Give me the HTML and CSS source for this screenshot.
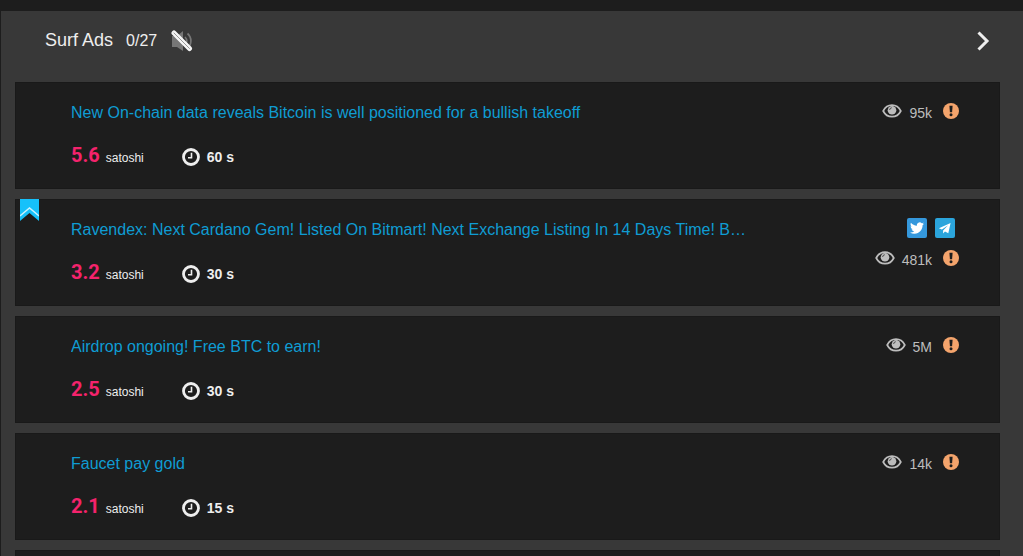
FILE: index.html
```html
<!DOCTYPE html>
<html lang="en">
<head>
<meta charset="utf-8">
<meta name="viewport" content="width=device-width, initial-scale=1">
<title>Surf Ads</title>
<link rel="stylesheet" href="styles.css">
</head>
<body>
<svg class="sprite" aria-hidden="true">
  <symbol id="clock" viewBox="0 0 18 18">
    <circle cx="9" cy="9" r="7.500" fill="none" stroke="currentColor" stroke-width="2.800"/>
    <path d="M9.500 4.800v5H6" fill="none" stroke="currentColor" stroke-width="1.600"/>
  </symbol>
  <symbol id="eye" viewBox="0 0 20 14">
    <path d="M1.200 7C3 3.400 6.300 1.200 10 1.200S17 3.400 18.800 7C17 10.600 13.700 12.700 10 12.700S3 10.600 1.200 7Z" fill="none" stroke="currentColor" stroke-width="1.700"/>
    <circle cx="10" cy="6.300" r="4.300" fill="currentColor"/>
    <path d="M7.600 6A2.500 2.500 0 0 1 9.800 3.700" fill="none" stroke="#1d1d1d" stroke-width=".7"/>
  </symbol>
  <symbol id="alert" viewBox="0 0 16 16">
    <circle cx="8" cy="8" r="8" fill="#f4a46c"/>
    <path d="M6.400 2.800h3.200L9.100 9.300H6.900Z" fill="#1d1d1d"/>
    <circle cx="8" cy="11.800" r="1.500" fill="#1d1d1d"/>
  </symbol>
</svg>
<main class="panel">
  <header class="panel-header">
    <h1 class="panel-title">Surf Ads</h1>
    <span class="panel-count">0/27</span>
    <button class="icon-button mute" type="button" aria-label="Unmute">
      <svg width="22" height="22" viewBox="0 0 22 22">
        <path d="M1 6h5l6-5v20L6 17H1Z" fill="#777"/>
        <path d="M14 7a5.500 5.500 0 0 1 0 8M16.500 3.500a10 10 0 0 1 0 15" fill="none" stroke="#777" stroke-width="1.700"/>
        <path d="M3 3 18.500 18.500" stroke="#f5f5f5" stroke-width="5" stroke-linecap="round"/>
        <path d="M3 3 18.500 18.500" stroke="#999" stroke-width="1" stroke-linecap="round"/>
      </svg>
    </button>
    <button class="icon-button next" type="button" aria-label="Next">
      <svg width="14" height="22" viewBox="0 0 14 22"><path d="M2.500 2.500 11 11 2.500 19.500" fill="none" stroke="#eee" stroke-width="3"/></svg>
    </button>
  </header>
  <section class="ads">
    <article class="ad">
      <div class="ad-body">
        <a class="ad-title" href="#">New On-chain data reveals Bitcoin is well positioned for a bullish takeoff</a>
        <div class="ad-meta"><span class="reward">5.6</span><span class="unit">satoshi</span><svg class="clock"><use href="#clock"/></svg><span class="duration">60 s</span></div>
      </div>
      <div class="ad-side">
        <div class="stats"><svg class="eye"><use href="#eye"/></svg><span class="views">95k</span><button class="icon-button" type="button" aria-label="Report"><svg class="alert"><use href="#alert"/></svg></button></div>
      </div>
    </article>
    <article class="ad">
      <svg class="ribbon" viewBox="0 0 19 22">
        <path d="M0 0h19v22L9.500 14 0 22Z" fill="#16c1fa"/>
        <path d="M0 17 9.500 9 19 17" fill="none" stroke="#c8f2ff" stroke-width="1.400"/>
      </svg>
      <div class="ad-body">
        <a class="ad-title" href="#">Ravendex: Next Cardano Gem! Listed On Bitmart! Next Exchange Listing In 14 Days Time! B…</a>
        <div class="ad-meta"><span class="reward">3.2</span><span class="unit">satoshi</span><svg class="clock"><use href="#clock"/></svg><span class="duration">30 s</span></div>
      </div>
      <div class="ad-side">
        <div class="social">
          <a class="social-link twitter" href="#" aria-label="Twitter"><svg width="14" height="14" viewBox="0 0 24 24"><path fill="#fff" d="M23.953 4.570a10 10 0 0 1-2.825.775 4.958 4.958 0 0 0 2.163-2.723c-.951.555-2.005.959-3.127 1.184a4.920 4.920 0 0 0-8.384 4.482C7.690 8.095 4.067 6.130 1.640 3.162a4.822 4.822 0 0 0-.666 2.475c0 1.710.870 3.213 2.188 4.096a4.904 4.904 0 0 1-2.228-.616v.060a4.923 4.923 0 0 0 3.946 4.827 4.996 4.996 0 0 1-2.212.085 4.936 4.936 0 0 0 4.604 3.417 9.867 9.867 0 0 1-6.102 2.105c-.390 0-.779-.023-1.170-.067a13.995 13.995 0 0 0 7.557 2.209c9.053 0 13.998-7.496 13.998-13.985 0-.210 0-.420-.015-.630A9.935 9.935 0 0 0 24 4.590Z"/></svg></a>
          <a class="social-link telegram" href="#" aria-label="Telegram"><svg width="14" height="14" viewBox="0 0 14 14"><path fill="#fff" d="M12.600 2 .900 7.200l3 1.400 6.200-4.300-5 5.100v3.200l1.900-2 3.300 1.600Z"/></svg></a>
        </div>
        <div class="stats"><svg class="eye"><use href="#eye"/></svg><span class="views">481k</span><button class="icon-button" type="button" aria-label="Report"><svg class="alert"><use href="#alert"/></svg></button></div>
      </div>
    </article>
    <article class="ad">
      <div class="ad-body">
        <a class="ad-title" href="#">Airdrop ongoing! Free BTC to earn!</a>
        <div class="ad-meta"><span class="reward">2.5</span><span class="unit">satoshi</span><svg class="clock"><use href="#clock"/></svg><span class="duration">30 s</span></div>
      </div>
      <div class="ad-side">
        <div class="stats"><svg class="eye"><use href="#eye"/></svg><span class="views">5M</span><button class="icon-button" type="button" aria-label="Report"><svg class="alert"><use href="#alert"/></svg></button></div>
      </div>
    </article>
    <article class="ad">
      <div class="ad-body">
        <a class="ad-title" href="#">Faucet pay gold</a>
        <div class="ad-meta"><span class="reward">2.1</span><span class="unit">satoshi</span><svg class="clock"><use href="#clock"/></svg><span class="duration">15 s</span></div>
      </div>
      <div class="ad-side">
        <div class="stats"><svg class="eye"><use href="#eye"/></svg><span class="views">14k</span><button class="icon-button" type="button" aria-label="Report"><svg class="alert"><use href="#alert"/></svg></button></div>
      </div>
    </article>
    <article class="ad"></article>
  </section>
</main>
</body>
</html>
```

FILE: styles.css
```css
* {
  box-sizing: border-box;
}

body {
  margin: 0;
  height: 100vh;
  overflow: hidden;
  padding-top: 11px;
  background: #1d1d1d;
  color: #eee;
  font-family: "Liberation Sans", Arial, sans-serif;
}

.sprite {
  position: absolute;
  width: 0;
  height: 0;
}

.panel {
  margin-left: 1px;
  padding: 0 23px 14px 14px;
  background: #383838;
}

.panel-header {
  display: flex;
  align-items: center;
  height: 71px;
  padding: 0 10px 12px 30px;
}

.panel-title {
  margin: 0 13px 0 0;
  font-size: 18px;
  font-weight: 400;
}

.panel-count {
  font-size: 16px;
}

.icon-button {
  display: flex;
  padding: 0;
  border: 0;
  background: none;
  cursor: pointer;
}

.mute {
  margin-left: 14px;
}

.next {
  margin-left: auto;
}

.ads {
  display: flex;
  flex-direction: column;
  gap: 10px;
}

.ad {
  position: relative;
  display: flex;
  gap: 24px;
  min-height: 107px;
  padding: 18px 40px 12px 55px;
  border: 1px solid #191919;
  background: #1d1d1d;
}

.ribbon {
  position: absolute;
  top: -1px;
  left: 4px;
  width: 19px;
  height: 22px;
}

.ad-body {
  flex: 1;
  min-width: 0;
  padding-top: 2px;
}

.ad-title {
  display: block;
  overflow: hidden;
  color: #0f9cd3;
  font-size: 16px;
  line-height: 20px;
  text-decoration: none;
  text-overflow: ellipsis;
  white-space: nowrap;
}

.ad-meta {
  display: flex;
  align-items: baseline;
  margin-top: 20px;
  line-height: 24px;
}

.reward {
  color: #f4236c;
  font-family: Roboto, "Liberation Sans", sans-serif;
  font-size: 20px;
  font-weight: 700;
}

.unit {
  width: 76px;
  margin-left: 6px;
  font-size: 12px;
}

.clock {
  align-self: center;
  width: 18px;
  height: 18px;
  margin-top: 1px;
}

.duration {
  margin-left: 7px;
  font-size: 14px;
  font-weight: 700;
}

.ad-side {
  display: flex;
  flex-direction: column;
  gap: 10px;
}

.social {
  display: flex;
  justify-content: flex-end;
  gap: 8px;
  padding-right: 4px;
}

.social-link {
  display: flex;
  align-items: center;
  justify-content: center;
  width: 20px;
  height: 20px;
  border-radius: 2px;
}

.twitter {
  background: #3598dc;
}

.telegram {
  background: #2ba5dc;
}

.stats {
  display: flex;
  align-items: center;
  justify-content: flex-end;
  height: 20px;
  color: #bdbdbd;
}

.eye {
  width: 20px;
  height: 14px;
}

.views {
  margin: 3px 11px 0 7px;
  font-size: 14px;
  line-height: 18px;
}

.alert {
  width: 16px;
  height: 16px;
}
```
